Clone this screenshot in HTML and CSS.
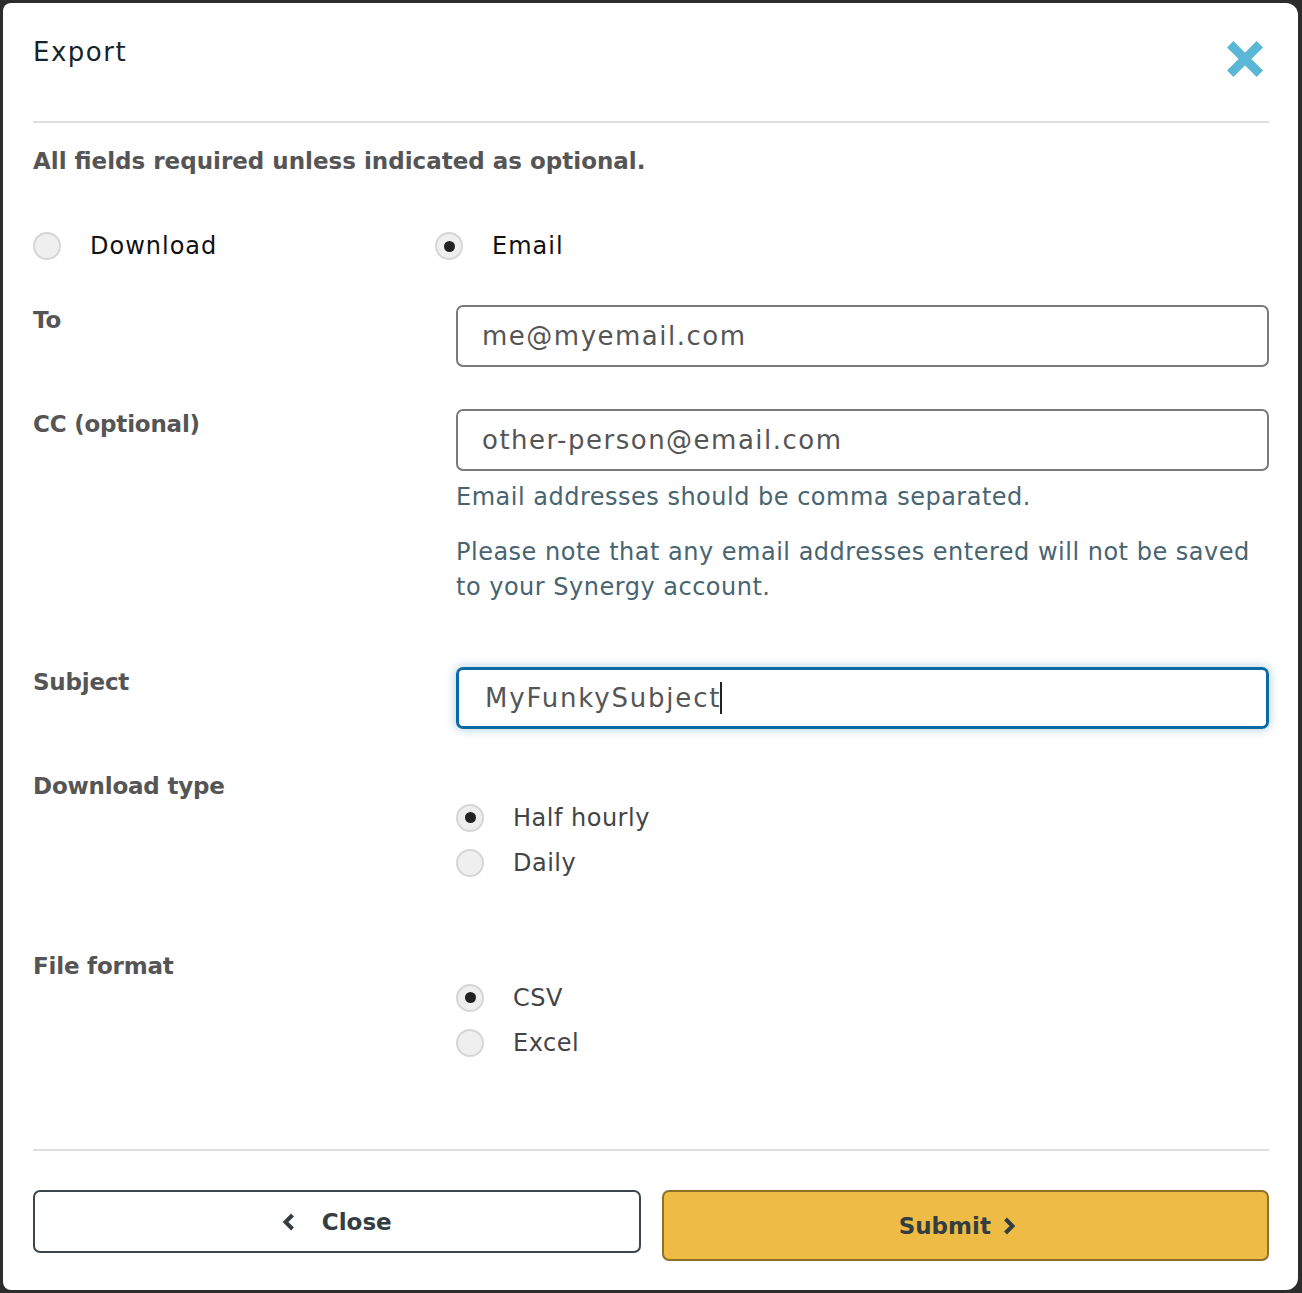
FILE: index.html
```html
<!DOCTYPE html>
<html lang="en">
<head>
<meta charset="utf-8">
<title>Export</title>
<link rel="stylesheet" href="styles.css">
</head>
<body>
<div class="modal">
  <header class="modal-header">
    <h1 class="title">Export</h1>
    <button class="close-x" aria-label="Close">
      <svg viewBox="0 0 36 36" width="36" height="36"><path d="M3.2 3.2 L32.8 32.8 M32.8 3.2 L3.2 32.8" stroke="#5ab8d6" stroke-width="9" fill="none"/></svg>
    </button>
  </header>
  <div class="divider"></div>
  <p class="required">All fields required unless indicated as optional.</p>

  <div class="mode-row">
    <label class="radio mode-first"><span class="dot"></span><span class="rlabel dark">Download</span></label>
    <label class="radio"><span class="dot checked"></span><span class="rlabel dark">Email</span></label>
  </div>

  <div class="row row-to">
    <div class="label">To</div>
    <div class="field"><div class="input">me@myemail.com</div></div>
  </div>

  <div class="row row-cc">
    <div class="label">CC (optional)</div>
    <div class="field">
      <div class="input">other-person@email.com</div>
      <p class="help help-first">Email addresses should be comma separated.</p>
      <p class="help">Please note that any email addresses entered will not be saved to your Synergy account.</p>
    </div>
  </div>

  <div class="row row-subject">
    <div class="label">Subject</div>
    <div class="field"><div class="input focused">MyFunkySubject<span class="caret"></span></div></div>
  </div>

  <div class="row row-type">
    <div class="label">Download type</div>
    <div class="field radios">
      <label class="radio"><span class="dot checked"></span><span class="rlabel">Half hourly</span></label>
      <label class="radio"><span class="dot"></span><span class="rlabel">Daily</span></label>
    </div>
  </div>

  <div class="row row-format">
    <div class="label">File format</div>
    <div class="field radios">
      <label class="radio"><span class="dot checked"></span><span class="rlabel">CSV</span></label>
      <label class="radio"><span class="dot"></span><span class="rlabel">Excel</span></label>
    </div>
  </div>

  <div class="divider divider-bottom"></div>

  <div class="actions">
    <button class="btn btn-close">
      <svg class="chev" viewBox="0 0 13 18" width="13" height="18"><path d="M10.5 2 L3.5 9 L10.5 16" stroke="#333d42" stroke-width="4" fill="none"/></svg>
      <span>Close</span>
    </button>
    <button class="btn btn-submit">
      <span>Submit</span>
      <svg class="chev" viewBox="0 0 13 18" width="13" height="18"><path d="M2.5 2 L9.5 9 L2.5 16" stroke="#333d42" stroke-width="4" fill="none"/></svg>
    </button>
  </div>
</div>
</body>
</html>
```

FILE: styles.css
```css
* { box-sizing: border-box; }
html, body { margin: 0; padding: 0; }
body {
  background: #2c2c2c;
  font-family: "DejaVu Sans", "Open Sans", sans-serif;
  padding: 3px 4px 3px 3px;
}
.modal {
  background: #fff;
  border-radius: 8px 12px 12px 8px;
  height: 1287px;
  padding: 0 29px 0 30px;
}
.modal-header {
  display: flex;
  justify-content: space-between;
  align-items: flex-start;
  height: 118px;
  padding-top: 30px;
}
.title {
  margin: 0;
  font-size: 26px;
  font-weight: 400;
  letter-spacing: 1.5px;
  line-height: 38px;
  color: #16232a;
}
.close-x {
  background: none;
  border: 0;
  padding: 0;
  margin: 8px 6px 0 0;
  width: 36px;
  height: 36px;
  display: block;
}
.close-x svg { display: block; }
.divider {
  height: 2px;
  background: #dedede;
}
.required {
  margin: 23px 0 0;
  font-size: 23px;
  line-height: 30px;
  font-weight: 700;
  color: #555;
}
.mode-row {
  display: flex;
  margin-top: 50px;
  height: 40px;
  align-items: center;
}
.mode-first { width: 402px; }
.radio {
  display: flex;
  align-items: center;
  height: 45px;
}
.dot {
  width: 28px;
  height: 28px;
  border-radius: 50%;
  background: #efefef;
  border: 2px solid #d6d6d6;
  position: relative;
  flex: none;
}
.dot.checked::after {
  content: "";
  position: absolute;
  width: 11px;
  height: 11px;
  border-radius: 50%;
  background: #222;
  left: 6.5px;
  top: 6.5px;
}
.rlabel {
  margin-left: 29px;
  font-size: 24px;
  letter-spacing: 0.5px;
  color: #444;
}
.rlabel.dark { color: #111; letter-spacing: 1px; }

.row {
  display: grid;
  grid-template-columns: 423px 1fr;
}
.label {
  font-size: 23px;
  line-height: 30px;
  font-weight: 700;
  letter-spacing: -0.2px;
  color: #555;
}
.row-to { margin-top: 39px; }
.row-cc { margin-top: 42px; }
.row-subject { margin-top: 62px; }
.row-type { margin-top: 42px; }
.row-format { margin-top: 66px; }

.input {
  height: 62px;
  border: 2px solid #7a7a7a;
  border-radius: 7px;
  padding: 0 24px;
  display: flex;
  align-items: center;
  font-size: 26px;
  letter-spacing: 1.5px;
  color: #555;
}
.input.focused {
  border: 3px solid #0a6aa6;
  box-shadow: 0 0 8px 2px rgba(10, 106, 166, 0.25);
  padding-left: 26px;
  letter-spacing: 1.8px;
}
.caret {
  display: inline-block;
  width: 2px;
  height: 32px;
  background: #222;
  margin-left: -1px;
}
.help {
  margin: 20px 0 0;
  font-size: 24px;
  line-height: 35px;
  letter-spacing: 0.5px;
  color: #476470;
}
.help.help-first { margin-top: 9px; }
.radios { padding-top: 24px; }

.divider-bottom { margin-top: 84px; }
.actions {
  display: grid;
  grid-template-columns: 1fr 1fr;
  gap: 21px;
  margin-top: 39px;
  align-items: start;
}
.btn {
  display: flex;
  align-items: center;
  justify-content: center;
  gap: 12px;
  font-family: inherit;
  font-size: 23px;
  font-weight: 700;
  color: #333d42;
  border-radius: 7px;
  padding: 0;
}
.btn-close {
  height: 63px;
  background: #fff;
  border: 2px solid #3c474c;
  gap: 27px;
}
.btn-submit {
  height: 71px;
  background: #eebc45;
  border: 2px solid #8e7128;
  padding-right: 16px;
}
.chev { display: block; }
```
